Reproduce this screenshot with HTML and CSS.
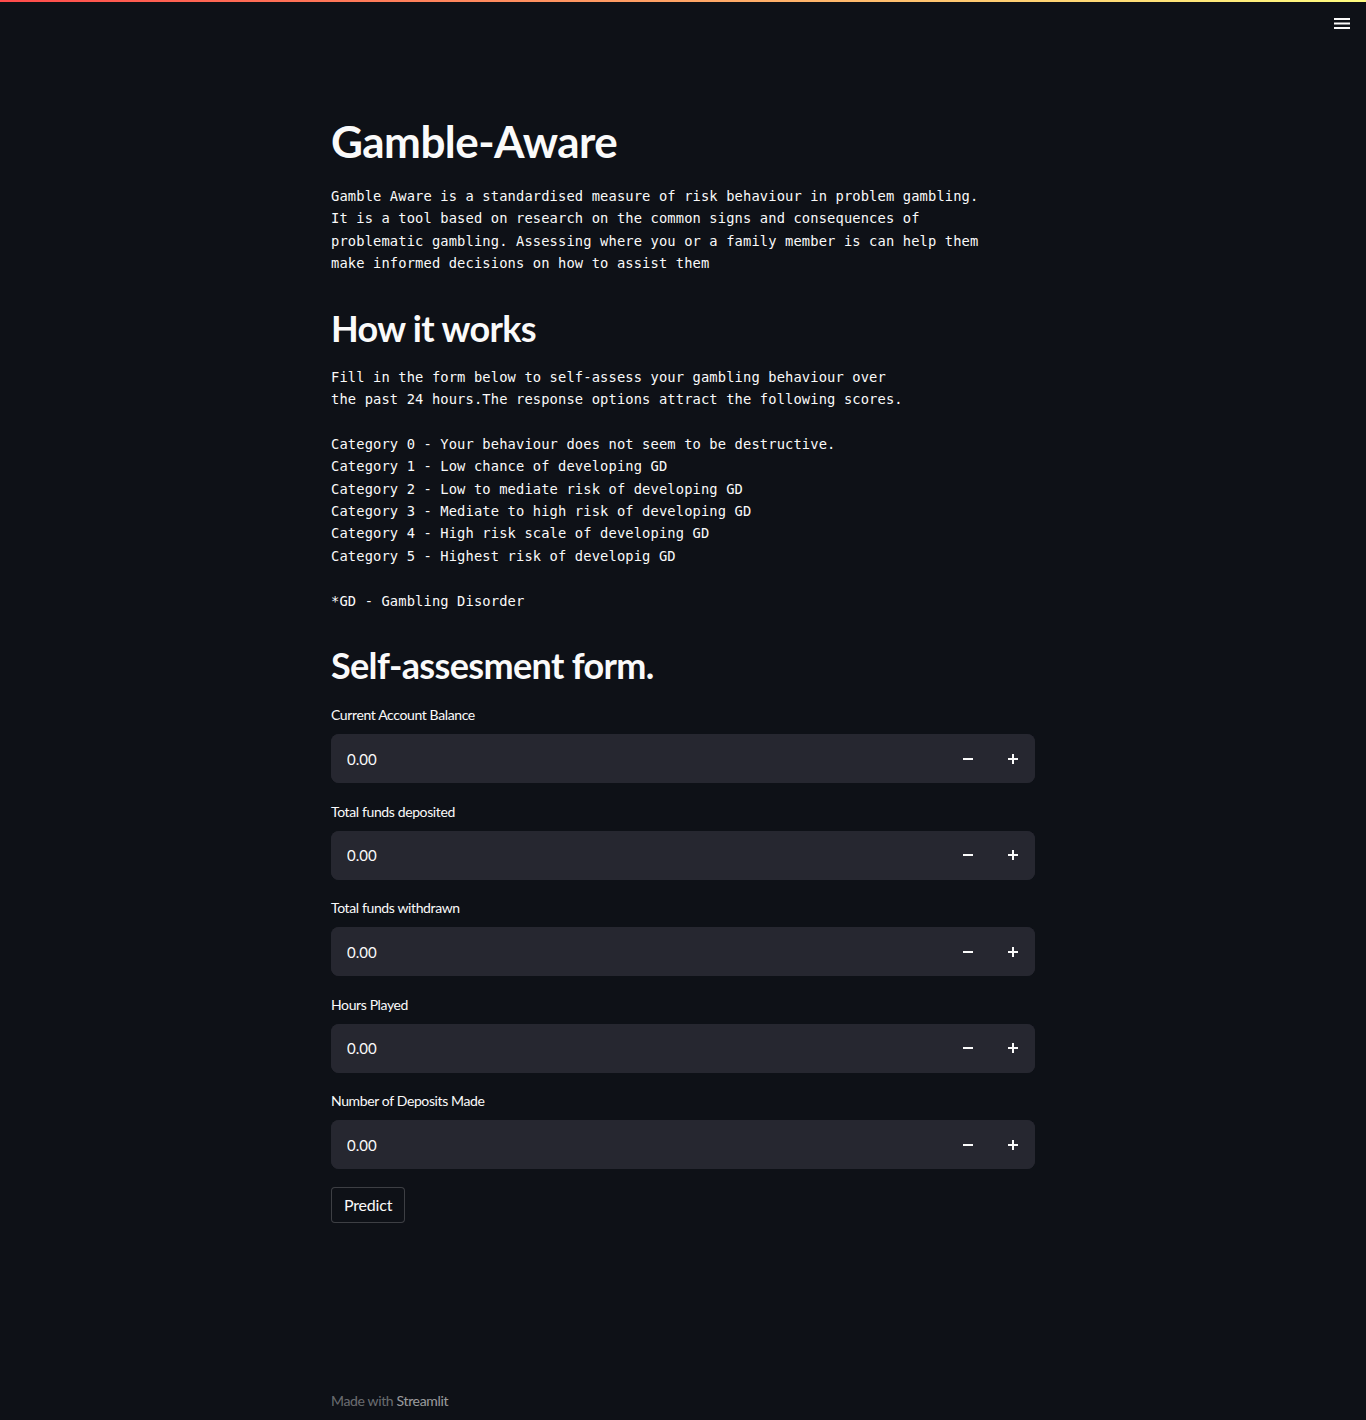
FILE: index.html
```html
<!DOCTYPE html>
<html lang="en">
<head>
<meta charset="utf-8">
<title>Gamble-Aware</title>
<link rel="stylesheet" href="styles.css">
</head>
<body>
<div class="decoration"></div>
<header class="topbar">
  <button class="menu-btn" aria-label="Menu">
    <svg width="16" height="12" viewBox="0 0 16 12"><rect x="0" y="0" width="16" height="2" fill="#fafafa"/><rect x="0" y="4.5" width="16" height="2" fill="#fafafa"/><rect x="0" y="9" width="16" height="2" fill="#fafafa"/></svg>
  </button>
</header>
<main class="main">
  <h1 class="title">Gamble-Aware</h1>
  <pre class="mono intro">Gamble Aware is a standardised measure of risk behaviour in problem gambling.
It is a tool based on research on the common signs and consequences of
problematic gambling. Assessing where you or a family member is can help them
make informed decisions on how to assist them</pre>

  <h2 class="heading">How it works</h2>
  <pre class="mono how">Fill in the form below to self-assess your gambling behaviour over
the past 24 hours.The response options attract the following scores.

Category 0 - Your behaviour does not seem to be destructive.
Category 1 - Low chance of developing GD
Category 2 - Low to mediate risk of developing GD
Category 3 - Mediate to high risk of developing GD
Category 4 - High risk scale of developing GD
Category 5 - Highest risk of developig GD

*GD - Gambling Disorder</pre>

  <h2 class="heading form-heading">Self-assesment form.</h2>

  <div class="form">
    <div class="field">
      <label class="label">Current Account Balance</label>
      <div class="number-input">
        <input class="num" type="text" value="0.00">
        <div class="steps">
          <button class="step"><svg width="10" height="10" viewBox="0 0 10 10"><rect x="0" y="4" width="10" height="2" fill="#fafafa"/></svg></button>
          <button class="step"><svg width="10" height="10" viewBox="0 0 10 10"><rect x="0" y="4" width="10" height="2" fill="#fafafa"/><rect x="4" y="0" width="2" height="10" fill="#fafafa"/></svg></button>
        </div>
      </div>
    </div>
    <div class="field">
      <label class="label">Total funds deposited</label>
      <div class="number-input">
        <input class="num" type="text" value="0.00">
        <div class="steps">
          <button class="step"><svg width="10" height="10" viewBox="0 0 10 10"><rect x="0" y="4" width="10" height="2" fill="#fafafa"/></svg></button>
          <button class="step"><svg width="10" height="10" viewBox="0 0 10 10"><rect x="0" y="4" width="10" height="2" fill="#fafafa"/><rect x="4" y="0" width="2" height="10" fill="#fafafa"/></svg></button>
        </div>
      </div>
    </div>
    <div class="field">
      <label class="label">Total funds withdrawn</label>
      <div class="number-input">
        <input class="num" type="text" value="0.00">
        <div class="steps">
          <button class="step"><svg width="10" height="10" viewBox="0 0 10 10"><rect x="0" y="4" width="10" height="2" fill="#fafafa"/></svg></button>
          <button class="step"><svg width="10" height="10" viewBox="0 0 10 10"><rect x="0" y="4" width="10" height="2" fill="#fafafa"/><rect x="4" y="0" width="2" height="10" fill="#fafafa"/></svg></button>
        </div>
      </div>
    </div>
    <div class="field">
      <label class="label">Hours Played</label>
      <div class="number-input">
        <input class="num" type="text" value="0.00">
        <div class="steps">
          <button class="step"><svg width="10" height="10" viewBox="0 0 10 10"><rect x="0" y="4" width="10" height="2" fill="#fafafa"/></svg></button>
          <button class="step"><svg width="10" height="10" viewBox="0 0 10 10"><rect x="0" y="4" width="10" height="2" fill="#fafafa"/><rect x="4" y="0" width="2" height="10" fill="#fafafa"/></svg></button>
        </div>
      </div>
    </div>
    <div class="field">
      <label class="label">Number of Deposits Made</label>
      <div class="number-input">
        <input class="num" type="text" value="0.00">
        <div class="steps">
          <button class="step"><svg width="10" height="10" viewBox="0 0 10 10"><rect x="0" y="4" width="10" height="2" fill="#fafafa"/></svg></button>
          <button class="step"><svg width="10" height="10" viewBox="0 0 10 10"><rect x="0" y="4" width="10" height="2" fill="#fafafa"/><rect x="4" y="0" width="2" height="10" fill="#fafafa"/></svg></button>
        </div>
      </div>
    </div>
    <div class="actions">
      <button class="predict">Predict</button>
    </div>
  </div>
</main>
<footer class="footer">
  <span class="made">Made with</span> <span class="brand">Streamlit</span>
</footer>
</body>
</html>
```

FILE: styles.css
```css
* { box-sizing: border-box; }
html, body {
  margin: 0;
  padding: 0;
  background: #0e1117;
  color: #fafafa;
  font-family: "Lato", "Noto Sans", sans-serif;
}
body {
  min-height: 1420px;
  display: flex;
  flex-direction: column;
}
.decoration {
  height: 2px;
  background: linear-gradient(90deg, #ff4b4b, #fffd80);
}
.topbar {
  position: absolute;
  top: 2px;
  right: 0;
  height: 44px;
  display: flex;
  align-items: center;
  padding-right: 16px;
}
.menu-btn {
  background: none;
  border: none;
  padding: 0;
  width: 16px;
  height: 12px;
  display: flex;
}
.main {
  width: 704px;
  margin: 0 auto;
  padding-top: 113px;
  flex: 1;
}
.title {
  margin: 0;
  font-size: 44px;
  line-height: 52px;
  font-weight: 700;
  letter-spacing: -0.55px;
}
.mono {
  margin: 0;
  font-family: "DejaVu Sans Mono", "Liberation Mono", monospace;
  font-size: 13.75px;
  line-height: 22.4px;
  letter-spacing: 0.13px;
  color: #fafafa;
  white-space: pre;
}
.intro { margin-top: 18px; }
.heading {
  margin: 32px 0 0;
  font-size: 36px;
  line-height: 43px;
  font-weight: 700;
  letter-spacing: -0.65px;
}
.how { margin-top: 16px; }
.form {
  margin-top: 17px;
  display: flex;
  flex-direction: column;
  gap: 17.5px;
}
.field {
  display: flex;
  flex-direction: column;
  gap: 9px;
}
.label {
  font-size: 14px;
  line-height: 21px;
  letter-spacing: -0.38px;
  color: #fafafa;
}
.number-input {
  display: flex;
  height: 49px;
  background: #262730;
  border-radius: 8px;
  overflow: hidden;
}
.num {
  flex: 1;
  min-width: 0;
  background: #262730;
  border: none;
  color: #fafafa;
  font-family: "Lato", "Noto Sans", sans-serif;
  font-size: 15px;
  padding: 0 16px;
  outline: none;
}
.steps {
  display: flex;
  width: 89px;
}
.step {
  flex: 1;
  background: #262730;
  border: none;
  padding: 0;
  display: flex;
  align-items: center;
  justify-content: center;
}
.actions { display: flex; }
.predict {
  background: #0e1117;
  color: #fafafa;
  border: 1px solid rgba(250, 250, 250, 0.2);
  border-radius: 4px;
  font-family: "Lato", "Noto Sans", sans-serif;
  font-size: 16px;
  letter-spacing: -0.2px;
  height: 36px;
  padding: 0 12px;
}
.footer {
  width: 704px;
  margin: 0 auto;
  padding-bottom: 10px;
  font-size: 14px;
  line-height: 18px;
  letter-spacing: -0.35px;
}
.made { color: rgba(250, 250, 250, 0.4); }
.brand { color: rgba(250, 250, 250, 0.6); }
```
